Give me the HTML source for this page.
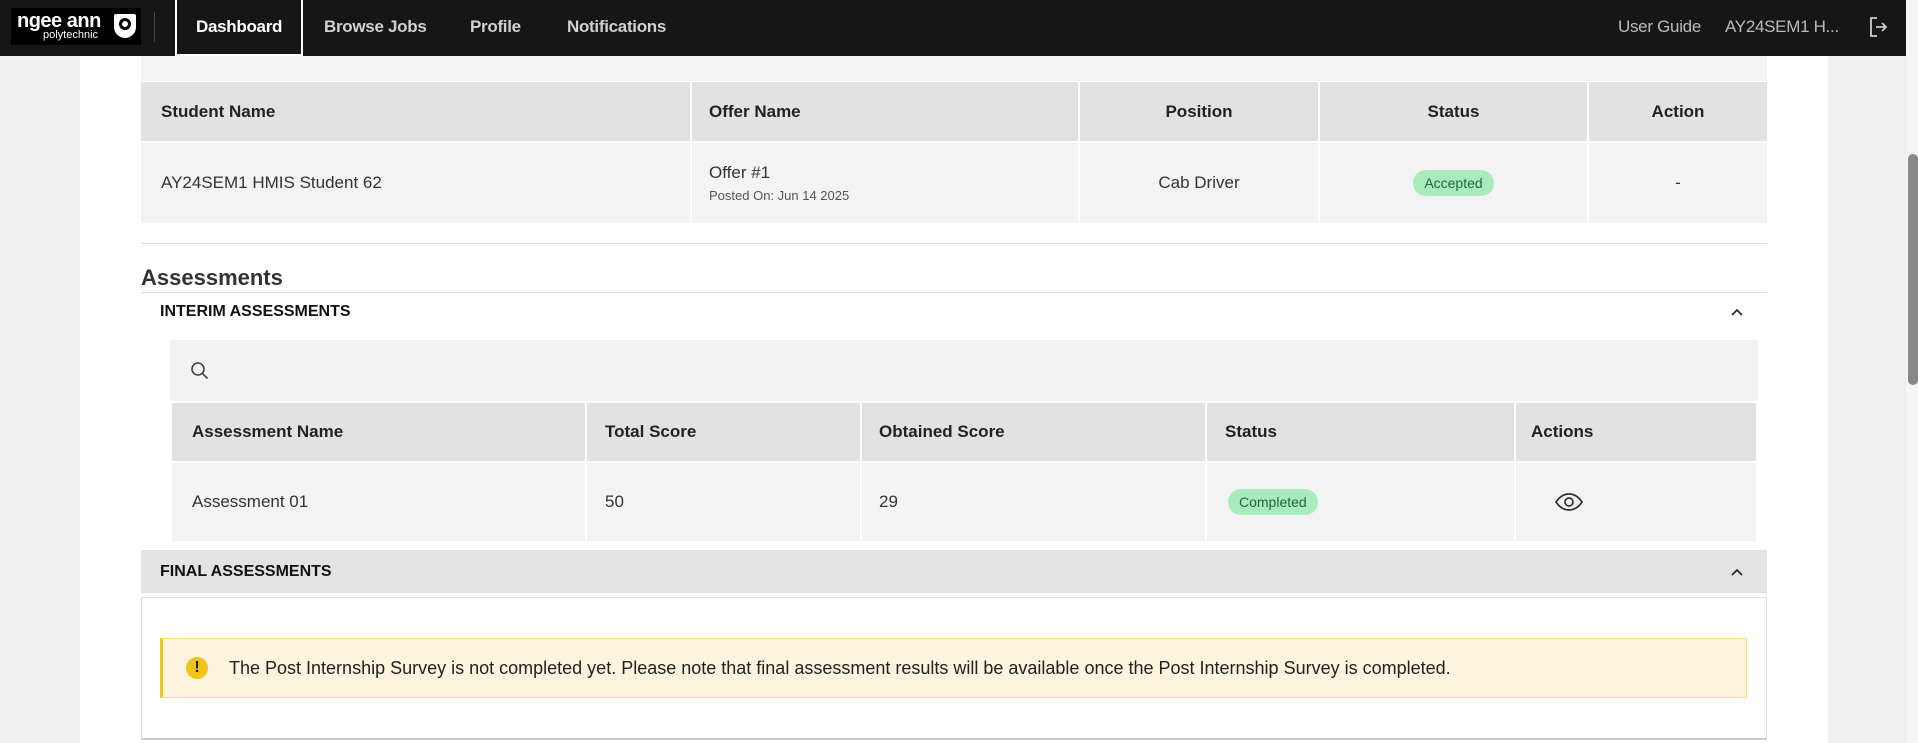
<!DOCTYPE html>
<html><head><style>
*{box-sizing:border-box;margin:0;padding:0}
body{width:1918px;height:743px;overflow:hidden;background:#efefef;font-family:"Liberation Sans",sans-serif;color:#222;position:relative}
.abs{position:absolute}
nav{position:absolute;left:0;top:0;width:1906px;height:56px;background:#161616}
.nl{position:absolute;top:17px;color:#d0d0d0;font-weight:bold;font-size:17px;letter-spacing:-0.3px}
.cell{position:absolute;display:flex;align-items:center;font-size:17px}
.h{background:#e2e2e2;font-weight:bold;color:#222}
.r{background:#f3f3f3;color:#333}
.badge{background:#a8ebbd;color:#1e6a38;font-size:14px;border-radius:14px;padding:5px 11px}
</style></head><body>
<nav>
 <div class="abs" style="left:11px;top:8px;width:130px;height:37px;background:#000;color:#fff">
  <div class="abs" style="left:6px;top:2px;font-size:20px;font-weight:bold;letter-spacing:-0.5px">ngee ann</div>
  <div class="abs" style="left:32px;top:21px;font-size:11px">polytechnic</div>
  <div class="abs" style="left:103px;top:6px;width:22px;height:24px;background:#fff;border-radius:2px 2px 11px 11px"></div>
  <div class="abs" style="left:108px;top:10px;width:12px;height:12px;border:3px solid #000;border-radius:50%"></div>
 </div>
 <div class="abs" style="left:154px;top:12px;width:1px;height:30px;background:#444"></div>
 <div class="abs" style="left:175px;top:0;width:128px;height:56px;border:2px solid #fff;border-top:none"></div>
 <div class="nl" style="left:196px;color:#fff">Dashboard</div>
 <div class="nl" style="left:324px">Browse Jobs</div>
 <div class="nl" style="left:470px">Profile</div>
 <div class="nl" style="left:567px">Notifications</div>
 <div class="nl" style="left:1618px;font-weight:normal;color:#bbb">User Guide</div>
 <div class="nl" style="left:1725px;font-weight:normal;color:#bbb">AY24SEM1 H...</div>
 <svg class="abs" style="left:1868px;top:16px" width="20" height="22" viewBox="0 0 20 22" fill="none" stroke="#ccc" stroke-width="1.8"><path d="M9 2H3v18h6M8 11h10M14 7l4 4-4 4"/></svg>
</nav>
<div class="abs" style="left:80px;top:56px;width:1748px;height:687px;background:#fff"></div>
<div class="abs" style="left:1906px;top:0;width:12px;height:743px;background:#f5f5f5"></div>
<div class="abs" style="left:1908px;top:154px;width:10px;height:231px;background:#888;border-radius:5px"></div>
<div class="abs" style="left:141px;top:56px;width:1626px;height:25px;background:#f3f3f3"></div>

<div class="cell h" style="left:141px;top:82px;width:549px;height:59px;padding-left:20px">Student Name</div>
<div class="cell h" style="left:692px;top:82px;width:386px;height:59px;padding-left:17px">Offer Name</div>
<div class="cell h" style="left:1080px;top:82px;width:238px;height:59px;justify-content:center">Position</div>
<div class="cell h" style="left:1320px;top:82px;width:267px;height:59px;justify-content:center">Status</div>
<div class="cell h" style="left:1589px;top:82px;width:178px;height:59px;justify-content:center">Action</div>
<div class="cell r" style="left:141px;top:143px;width:549px;height:80px;padding-left:20px">AY24SEM1 HMIS Student 62</div>
<div class="cell r" style="left:692px;top:143px;width:386px;height:80px;padding-left:17px;flex-direction:column;align-items:flex-start;justify-content:center">Offer #1<div style="font-size:13px;color:#555;margin-top:5px">Posted On: Jun 14 2025</div></div>
<div class="cell r" style="left:1080px;top:143px;width:238px;height:80px;justify-content:center">Cab Driver</div>
<div class="cell r" style="left:1320px;top:143px;width:267px;height:80px;justify-content:center"><span class="badge">Accepted</span></div>
<div class="cell r" style="left:1589px;top:143px;width:178px;height:80px;justify-content:center">-</div>

<div class="abs" style="left:141px;top:243px;width:1626px;height:1px;background:#ddd"></div>
<div class="abs" style="left:141px;top:265px;font-size:22px;font-weight:bold;color:#333">Assessments</div>
<div class="abs" style="left:141px;top:292px;width:1626px;height:1px;background:#ddd"></div>
<div class="abs" style="left:160px;top:303px;font-size:16px;font-weight:bold;color:#111">INTERIM ASSESSMENTS</div>
<svg class="abs" style="left:1730px;top:307px" width="14" height="10" viewBox="0 0 14 10" fill="none" stroke="#222" stroke-width="1.6"><path d="M2 8l5-5 5 5"/></svg>
<div class="abs" style="left:170px;top:340px;width:1588px;height:61px;background:#f2f2f2"></div>
<svg class="abs" style="left:190px;top:361px" width="20" height="20" viewBox="0 0 20 20" fill="none" stroke="#444" stroke-width="1.6"><circle cx="8" cy="8" r="6"/><path d="M12.5 12.5l5 5"/></svg>

<div class="cell h" style="left:172px;top:403px;width:413px;height:58px;padding-left:20px">Assessment Name</div>
<div class="cell h" style="left:587px;top:403px;width:273px;height:58px;padding-left:18px">Total Score</div>
<div class="cell h" style="left:862px;top:403px;width:343px;height:58px;padding-left:17px">Obtained Score</div>
<div class="cell h" style="left:1207px;top:403px;width:307px;height:58px;padding-left:18px">Status</div>
<div class="cell h" style="left:1516px;top:403px;width:240px;height:58px;padding-left:15px">Actions</div>
<div class="cell r" style="left:172px;top:463px;width:413px;height:78px;padding-left:20px">Assessment 01</div>
<div class="cell r" style="left:587px;top:463px;width:273px;height:78px;padding-left:18px">50</div>
<div class="cell r" style="left:862px;top:463px;width:343px;height:78px;padding-left:17px">29</div>
<div class="cell r" style="left:1207px;top:463px;width:307px;height:78px;padding-left:21px"><span class="badge">Completed</span></div>
<div class="cell r" style="left:1516px;top:463px;width:240px;height:78px;padding-left:38px"><svg width="30" height="20" viewBox="0 0 30 20" fill="none" stroke="#333" stroke-width="1.7"><path d="M2 10C6 4 10 2 15 2s9 2 13 8c-4 6-8 8-13 8S6 16 2 10z"/><circle cx="15" cy="10" r="4"/></svg></div>

<div class="abs" style="left:141px;top:550px;width:1626px;height:43px;background:#e3e3e3"></div>
<div class="abs" style="left:160px;top:563px;font-size:16px;font-weight:bold;color:#111">FINAL ASSESSMENTS</div>
<svg class="abs" style="left:1730px;top:567px" width="14" height="10" viewBox="0 0 14 10" fill="none" stroke="#222" stroke-width="1.6"><path d="M2 8l5-5 5 5"/></svg>
<div class="abs" style="left:141px;top:597px;width:1626px;height:143px;border:1px solid #ddd;border-bottom:2px solid #ccc"></div>
<div class="abs" style="left:160px;top:638px;width:1587px;height:60px;background:#fcf4dc;border:1px solid #f7dd7f;border-left:3px solid #f0c419"></div>
<div class="abs" style="left:186px;top:657px;width:22px;height:22px;border-radius:50%;background:#f0c419;color:#222;font-size:16px;font-weight:bold;text-align:center;line-height:22px">!</div>
<div class="abs" style="left:229px;top:658px;font-size:18px;color:#222">The Post Internship Survey is not completed yet. Please note that final assessment results will be available once the Post Internship Survey is completed.</div>
</body></html>
